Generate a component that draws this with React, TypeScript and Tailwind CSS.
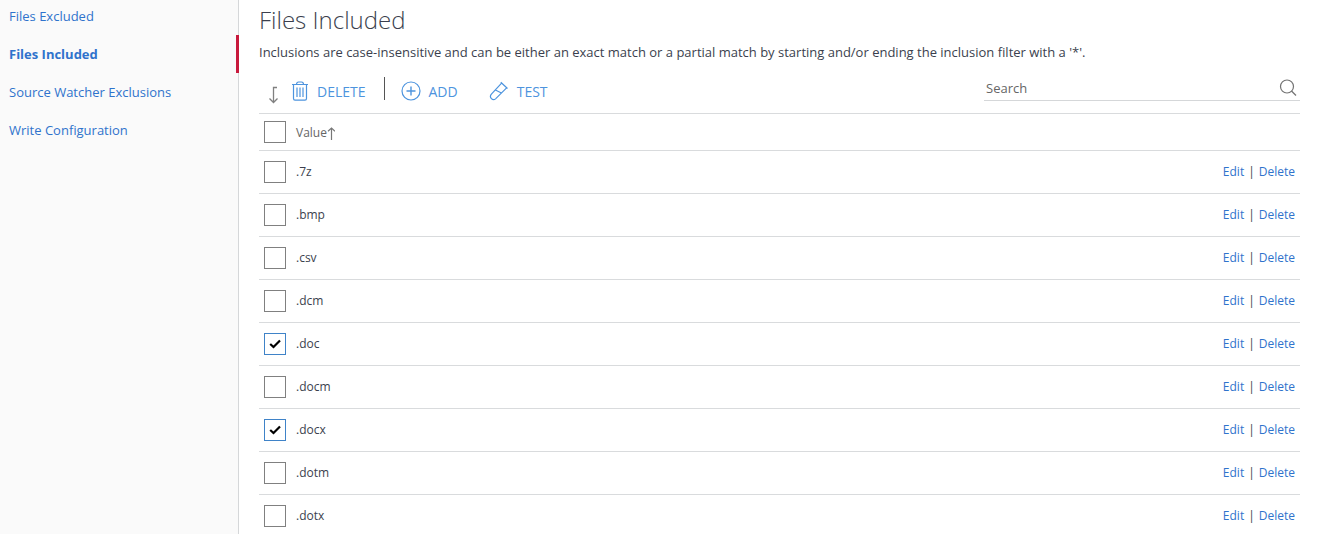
const sections = ["Files Excluded", "Files Included", "Source Watcher Exclusions", "Write Configuration"];
const activeSection = "Files Included";

const filters = [
  { value: ".7z", selected: false },
  { value: ".bmp", selected: false },
  { value: ".csv", selected: false },
  { value: ".dcm", selected: false },
  { value: ".doc", selected: true },
  { value: ".docm", selected: false },
  { value: ".docx", selected: true },
  { value: ".dotm", selected: false },
  { value: ".dotx", selected: false },
];

function ApplyArrowIcon() {
  return (
    <svg width="10" height="18" viewBox="0 0 10 18" fill="none" stroke="#808080" strokeWidth="1.3" aria-hidden="true">
      <path d="M9 1.5H5.5V16.5M1.5 12.5L5.5 16.5L9.5 12.5" />
    </svg>
  );
}

function TrashIcon() {
  return (
    <svg width="18" height="20" viewBox="0 0 18 20" fill="none" stroke="currentColor" strokeWidth="1.2" aria-hidden="true">
      <path d="M1 3.5H17M5.5 3.5C5.5 1.8 6.5 1 7.5 1H10.5C11.5 1 12.5 1.8 12.5 3.5M2.5 3.5V17.5C2.5 18.5 3 19.2 4 19.2H14C15 19.2 15.5 18.5 15.5 17.5V3.5M6 6.5V16M9 6.5V16M12 6.5V16" />
    </svg>
  );
}

function AddIcon() {
  return (
    <svg width="20" height="20" viewBox="0 0 20 20" fill="none" stroke="currentColor" strokeWidth="1.2" aria-hidden="true">
      <circle cx="10" cy="10" r="9" />
      <path d="M10 5.5V14.5M5.5 10H14.5" strokeWidth="1.4" />
    </svg>
  );
}

function TestTubeIcon() {
  return (
    <svg width="20" height="20" viewBox="0 0 20 20" fill="none" stroke="currentColor" strokeWidth="1.2" aria-hidden="true">
      <path d="M11.8 1.3L18.5 7.5M12.6 2.2L2.4 13.2C1.2 14.6 1.2 16.4 2.4 17.6C3.6 18.8 5.4 18.8 6.8 17.6L17.6 6.8M6.4 9L12.4 12" />
    </svg>
  );
}

function SearchIcon() {
  return (
    <svg width="18" height="18" viewBox="0 0 18 18" fill="none" stroke="#737373" strokeWidth="1.2" aria-hidden="true">
      <circle cx="8" cy="7.5" r="6.5" />
      <path d="M12.5 12L17 16.5" />
    </svg>
  );
}

function SortUpIcon() {
  return (
    <svg width="8" height="13" viewBox="0 0 8 13" fill="none" stroke="#777777" strokeWidth="1.2" aria-hidden="true">
      <path d="M4.5 13V1M1 4.2L4.5 1L8 4.2" />
    </svg>
  );
}

function Tick({ label, selected = false }: { label: string; selected?: boolean }) {
  return (
    <span className="grid size-[22px]">
      <input
        type="checkbox"
        aria-label={label}
        defaultChecked={selected}
        className="peer col-start-1 row-start-1 size-[22px] appearance-none border border-[#808080] bg-white checked:border-[#3f83c8]"
      />
      <svg
        className="pointer-events-none invisible col-start-1 row-start-1 place-self-center peer-checked:visible"
        width="12"
        height="10"
        viewBox="0 0 12 10"
        fill="none"
        stroke="#000000"
        strokeWidth="2.2"
        aria-hidden="true"
      >
        <path d="M1.2 5L4.5 8L11 1.5" />
      </svg>
    </span>
  );
}

export default function App() {
  return (
    <div className="flex h-screen bg-white font-['Open_Sans','Noto_Sans',sans-serif] text-[13px] text-[#3b3f4e]">
      <nav aria-label="Configuration" className="w-[239px] shrink-0 border-r border-[#d5d7d9] bg-[#fafafa]">
        <ul className="-mt-[3px]">
          {sections.map((name) => (
            <li key={name}>
              <a
                href="#"
                aria-current={name === activeSection ? "page" : undefined}
                className={
                  name === activeSection
                    ? "-mr-px flex h-[38px] items-center border-r-3 border-[#c8193c] pt-0.5 pl-[9px] font-bold text-[#2f73cc]"
                    : "flex h-[38px] items-center pt-0.5 pl-[9px] text-[#2f73cc]"
                }
              >
                {name}
              </a>
            </li>
          ))}
        </ul>
      </nav>

      <main className="min-w-0 flex-1 overflow-y-auto pr-[19px] pl-5 [scrollbar-width:none]">
        <h1 className="pt-1 text-2xl font-light">Files Included</h1>
        <p className="pt-1.5 leading-5">
          Inclusions are case-insensitive and can be either an exact match or a partial match by starting and/or ending
          the inclusion filter with a '*'.
        </p>

        <div className="flex h-[51px] items-start justify-between">
          <div className="flex items-center pt-[15px] text-sm leading-5 text-[#4d94de]">
            <span className="mr-3 ml-[9px] pt-2">
              <ApplyArrowIcon />
            </span>
            <button type="button" className="ml-px flex items-center gap-2">
              <TrashIcon />
              <span className="pt-0.5">DELETE</span>
            </button>
            <span className="mr-4 mb-1 ml-[18px] h-[23px] w-px bg-[#555555]" />
            <button type="button" className="flex items-center gap-2">
              <AddIcon />
              <span className="pt-0.5">ADD</span>
            </button>
            <button type="button" className="ml-[31px] flex items-center gap-2">
              <TestTubeIcon />
              <span className="pt-0.5">TEST</span>
            </button>
          </div>
          <label className="mt-3 flex h-[27px] w-[316px] items-center border-b border-[#d5d7d9] pt-0.5 pr-[3px] pl-0.5">
            <input
              type="search"
              placeholder="Search"
              aria-label="Search"
              className="min-w-0 flex-1 bg-transparent pt-0.5 outline-none placeholder:text-[#666666]"
            />
            <SearchIcon />
          </label>
        </div>

        <table className="w-full border-collapse border-t border-[#d9dbdd] text-xs">
          <thead>
            <tr className="h-[37px] border-b border-[#d9dbdd]">
              <th scope="col" className="w-[37px] pl-[5px]">
                <Tick label="Select all values" />
              </th>
              <th scope="col" className="pt-0.5 text-left font-normal text-[#666666]">
                <button type="button" className="flex items-center">
                  Value
                  <SortUpIcon />
                </button>
              </th>
              <th scope="col" aria-label="Actions" />
            </tr>
          </thead>
          <tbody>
            {filters.map(({ value, selected }) => (
              <tr key={value} className="h-[43px] border-b border-[#d9dbdd]">
                <td className="pl-[5px]">
                  <Tick label={"Select " + value} selected={selected} />
                </td>
                <td>{value}</td>
                <td className="pr-[5px]">
                  <div className="flex justify-end gap-1">
                    <a href="#" className="text-[#2f73cc]">
                      Edit
                    </a>
                    <span>|</span>
                    <a href="#" className="text-[#2f73cc]">
                      Delete
                    </a>
                  </div>
                </td>
              </tr>
            ))}
          </tbody>
        </table>
      </main>
    </div>
  );
}
